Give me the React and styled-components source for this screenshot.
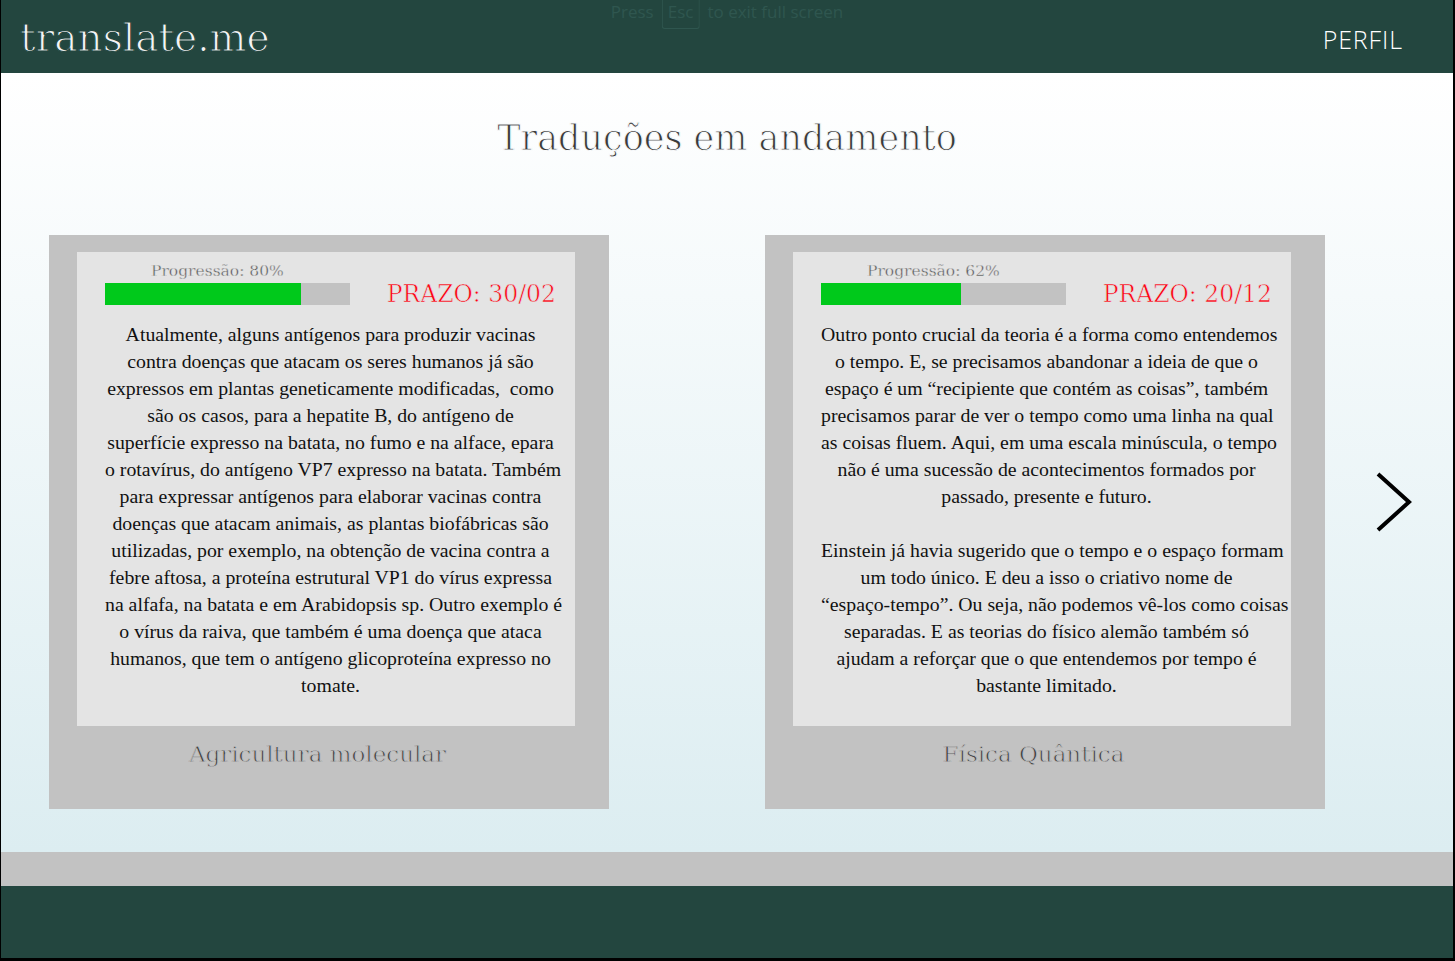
import React from "react";
import styled, { createGlobalStyle } from "styled-components";

const GlobalStyle = createGlobalStyle`
  html, body {
    margin: 0;
    padding: 0;
    background: #000;
  }
  * {
    box-sizing: border-box;
  }
`;

const slab = `"DejaVu Serif", "Liberation Serif", serif`;

const translations = [
  {
    id: 1,
    progress: 80,
    fill: 80,
    deadline: "30/02",
    title: "Agricultura molecular",
    paragraphs: [
      [
        "Atualmente, alguns antígenos para produzir vacinas",
        "contra doenças que atacam os seres humanos já são",
        "expressos em plantas geneticamente modificadas,  como",
        "são os casos, para a hepatite B, do antígeno de",
        "superfície expresso na batata, no fumo e na alface, epara",
        "o rotavírus, do antígeno VP7 expresso na batata. Também",
        "para expressar antígenos para elaborar vacinas contra",
        "doenças que atacam animais, as plantas biofábricas são",
        "utilizadas, por exemplo, na obtenção de vacina contra a",
        "febre aftosa, a proteína estrutural VP1 do vírus expressa",
        "na alfafa, na batata e em Arabidopsis sp. Outro exemplo é",
        "o vírus da raiva, que também é uma doença que ataca",
        "humanos, que tem o antígeno glicoproteína expresso no",
        "tomate.",
      ],
    ],
  },
  {
    id: 2,
    progress: 62,
    fill: 57,
    deadline: "20/12",
    title: "Física Quântica",
    paragraphs: [
      [
        "Outro ponto crucial da teoria é a forma como entendemos",
        "o tempo. E, se precisamos abandonar a ideia de que o",
        "espaço é um “recipiente que contém as coisas”, também",
        "precisamos parar de ver o tempo como uma linha na qual",
        "as coisas fluem. Aqui, em uma escala minúscula, o tempo",
        "não é uma sucessão de acontecimentos formados por",
        "passado, presente e futuro.",
      ],
      [
        "Einstein já havia sugerido que o tempo e o espaço formam",
        "um todo único. E deu a isso o criativo nome de",
        "“espaço-tempo”. Ou seja, não podemos vê-los como coisas",
        "separadas. E as teorias do físico alemão também só",
        "ajudam a reforçar que o que entendemos por tempo é",
        "bastante limitado.",
      ],
    ],
  },
];

const Page = styled.div`
  margin: 0 2px 0 1px;
  height: 958px;
  display: flex;
  flex-direction: column;
  overflow: hidden;
`;

const Header = styled.header`
  position: relative;
  height: 73px;
  flex-shrink: 0;
  background: #23463f;
  display: flex;
  align-items: center;
  justify-content: space-between;
  padding: 0 50px 0 19px;
`;

const Logo = styled.div`
  font-family: ${slab};
  font-size: 39px;
  color: #f4f4f4;
  -webkit-text-stroke: 1.1px #23463f;
  line-height: 1;
  padding-top: 2px;
`;

const NavLink = styled.a`
  font-family: "Open Sans", "Noto Sans", sans-serif;
  font-weight: 300;
  font-size: 25px;
  letter-spacing: 0.9px;
  color: #fff;
  text-decoration: none;
  padding-top: 4px;
`;

const EscNotice = styled.div`
  position: absolute;
  top: 0;
  left: 50%;
  transform: translateX(-50%);
  display: flex;
  align-items: flex-start;
  gap: 8px;
  font-family: "Open Sans", "Noto Sans", sans-serif;
  font-size: 17px;
  line-height: 24px;
  color: #2f564f;
  white-space: nowrap;
`;

const Key = styled.span`
  border: 1px solid #2f564f;
  border-top: none;
  border-radius: 0 0 3px 3px;
  padding: 0 5px 4px;
`;

const Main = styled.main`
  flex: 1;
  background: linear-gradient(180deg, #ffffff 0%, #dcedf1 100%);
  display: flex;
  flex-direction: column;
  align-items: stretch;
`;

const Title = styled.h1`
  margin: 43px 0 0;
  text-align: center;
  font-family: ${slab};
  font-weight: normal;
  font-size: 35px;
  line-height: 44px;
  color: #3a3a3a;
  -webkit-text-stroke: 1px #f9fbfc;
`;

const CardRow = styled.section`
  display: flex;
  align-items: center;
  gap: 156px;
  margin-top: 75px;
  padding-left: 48px;
`;

const Card = styled.article`
  width: 560px;
  flex-shrink: 0;
  background: #c2c2c2;
  padding: 17px 34px 41px 28px;
`;

const Sheet = styled.div`
  background: #e4e4e4;
  padding: 10px 19px 27px 28px;
`;

const TopRow = styled.div`
  display: flex;
  justify-content: space-between;
  align-items: flex-end;
`;

const ProgressCol = styled.div`
  width: 245px;
`;

const ProgressLabel = styled.div`
  font-family: ${slab};
  font-size: 15.5px;
  line-height: 18px;
  color: #555;
  -webkit-text-stroke: 0.4px #e4e4e4;
  padding-left: 46px;
  margin-bottom: 3px;
`;

const Track = styled.div`
  height: 22px;
  background: #c2c2c2;
`;

const Fill = styled.div`
  height: 100%;
  background: #00c91b;
`;

const Deadline = styled.div`
  font-family: ${slab};
  font-size: 23.5px;
  line-height: 22px;
  color: #ff0010;
  -webkit-text-stroke: 0.6px #e4e4e4;
`;

const Body = styled.div`
  margin-top: 16px;
  font-family: "Liberation Serif", "Times New Roman", serif;
  font-size: 19.8px;
  line-height: 27px;
  color: #111;
  text-align: center;
  white-space: pre;
`;

const Paragraph = styled.p`
  margin: 0;
  & + & {
    margin-top: 27px;
  }
`;

const Caption = styled.h2`
  margin: 14px 0 0;
  padding-right: 17px;
  text-align: center;
  font-family: ${slab};
  font-weight: normal;
  font-size: 23px;
  line-height: 28px;
  color: #404040;
  -webkit-text-stroke: 0.8px #c2c2c2;
`;

const NextButton = styled.button`
  margin-left: -106px;
  margin-bottom: 40px;
  background: none;
  border: none;
  padding: 0;
  cursor: pointer;
  display: flex;
`;

const Strip = styled.div`
  height: 34px;
  flex-shrink: 0;
  background: #c2c2c2;
`;

const Footer = styled.footer`
  height: 72px;
  flex-shrink: 0;
  background: #23463f;
`;

const TranslationCard = ({ item }) => (
  <Card>
    <Sheet>
      <TopRow>
        <ProgressCol>
          <ProgressLabel>Progressão: {item.progress}%</ProgressLabel>
          <Track>
            <Fill style={{ width: `${item.fill}%` }} />
          </Track>
        </ProgressCol>
        <Deadline>PRAZO: {item.deadline}</Deadline>
      </TopRow>
      <Body>
        {item.paragraphs.map((lines, i) => (
          <Paragraph key={i}>
            {lines.map((line, j) => (
              <React.Fragment key={j}>
                {line}
                {j < lines.length - 1 && <br />}
              </React.Fragment>
            ))}
          </Paragraph>
        ))}
      </Body>
    </Sheet>
    <Caption>{item.title}</Caption>
  </Card>
);

const App = () => {
  return (
    <>
      <GlobalStyle />
      <Page>
        <Header>
          <Logo>translate.me</Logo>
          <EscNotice>
            <span>Press</span>
            <Key>Esc</Key>
            <span>to exit full screen</span>
          </EscNotice>
          <NavLink href="#">PERFIL</NavLink>
        </Header>
        <Main>
          <Title>Traduções em andamento</Title>
          <CardRow>
            {translations.map((item) => (
              <TranslationCard key={item.id} item={item} />
            ))}
            <NextButton aria-label="Próximo">
              <svg width="38" height="62" viewBox="0 0 38 62">
                <polyline
                  points="3,3 34,31 3,59"
                  fill="none"
                  stroke="#000"
                  strokeWidth="4"
                />
              </svg>
            </NextButton>
          </CardRow>
        </Main>
        <Strip />
        <Footer />
      </Page>
    </>
  );
};

export default App;
